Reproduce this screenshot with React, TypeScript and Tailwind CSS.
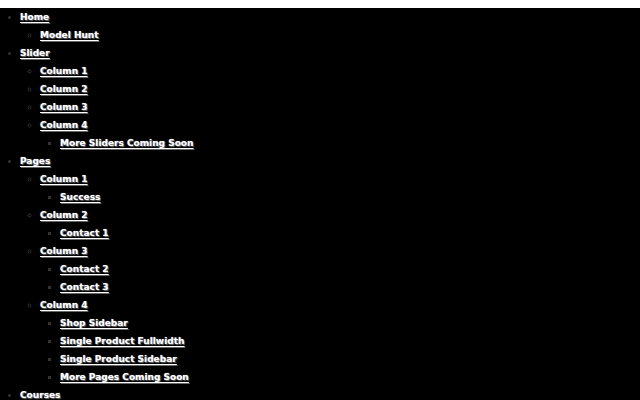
import React from 'react';

type Item = { label: string; children?: Item[] };

const menu: Item[] = [
  { label: 'Home', children: [{ label: 'Model Hunt' }] },
  {
    label: 'Slider',
    children: [
      { label: 'Column 1' },
      { label: 'Column 2' },
      { label: 'Column 3' },
      { label: 'Column 4', children: [{ label: 'More Sliders Coming Soon' }] },
    ],
  },
  {
    label: 'Pages',
    children: [
      { label: 'Column 1', children: [{ label: 'Success' }] },
      { label: 'Column 2', children: [{ label: 'Contact 1' }] },
      { label: 'Column 3', children: [{ label: 'Contact 2' }, { label: 'Contact 3' }] },
      {
        label: 'Column 4',
        children: [
          { label: 'Shop Sidebar' },
          { label: 'Single Product Fullwidth' },
          { label: 'Single Product Sidebar' },
          { label: 'More Pages Coming Soon' },
        ],
      },
    ],
  },
  { label: 'Courses', children: [{ label: 'All Courses' }] },
  { label: 'Blog' },
];

const listStyles = ['list-disc', 'list-[circle]', 'list-[square]'];

const MenuList = ({ items, depth = 0 }: { items: Item[]; depth?: number }) => (
  <ul className={`${listStyles[depth] ?? 'list-[square]'} pl-5`}>
    {items.map((item, i) => (
      <li key={i} className="marker:text-[#333]">
        <a
          href="#"
          className="text-white font-bold underline underline-offset-2 [text-shadow:0_0_1px_#999,1px_1px_1px_#666]"
        >
          {item.label}
        </a>
        {item.children && <MenuList items={item.children} depth={depth + 1} />}
      </li>
    ))}
  </ul>
);

export default function App() {
  return (
    <div className="min-h-screen w-full bg-black font-['DejaVu_Sans',sans-serif] text-[9px] leading-[18px]">
      <div className="h-2 bg-white" />
      <MenuList items={menu} />
    </div>
  );
}
